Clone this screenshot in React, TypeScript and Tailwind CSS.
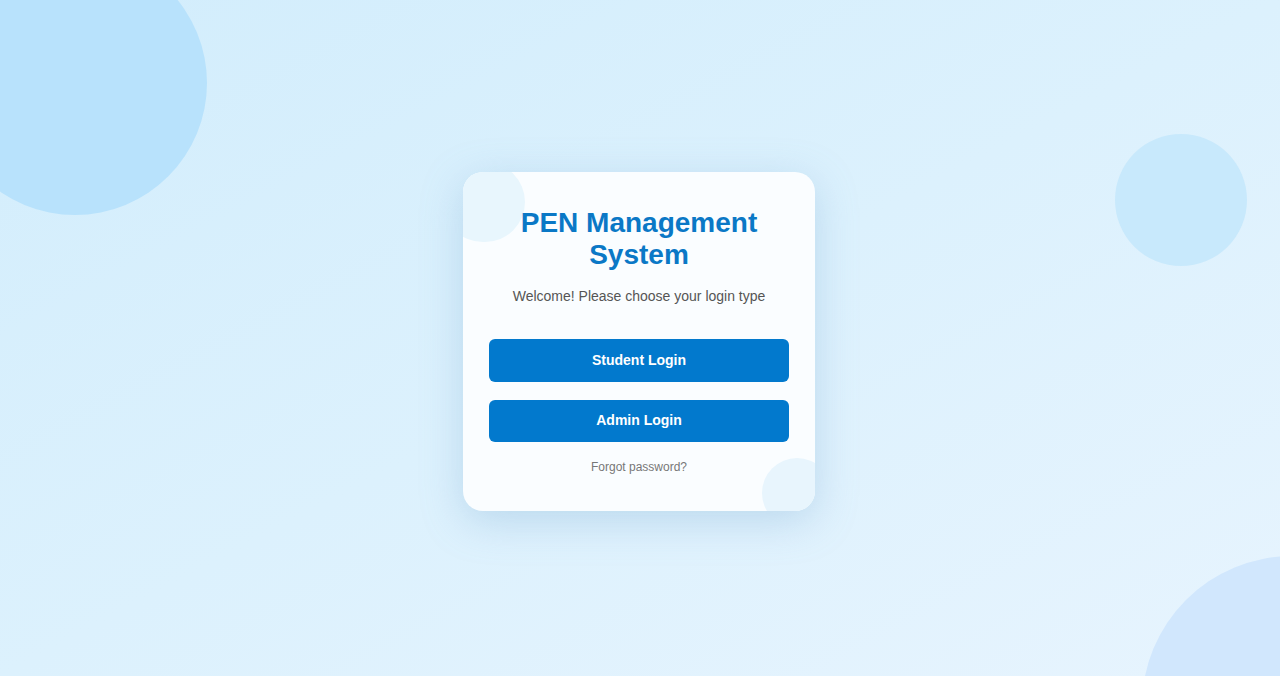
import { useState } from "react";

export default function App() {
  const [mode, setMode] = useState<string | null>(null);

  return (
    <div className="relative w-full h-[676px] overflow-hidden bg-gradient-to-br from-[#d2edfc] via-[#dcf1fd] to-[#e7f4fe] flex items-center justify-center font-['Liberation_Sans',Arial,sans-serif]">
      {/* background bubbles */}
      <div className="absolute -left-[57px] -top-[49px] w-[264px] h-[264px] rounded-full bg-[#b8e2fc]" />
      <div className="absolute left-[1115px] top-[134px] w-[132px] h-[132px] rounded-full bg-[#c8e9fc]" />
      <div className="absolute left-[1142px] top-[556px] w-[300px] h-[300px] rounded-full bg-[#d1e7fd]" />

      {/* Card */}
      <div className="relative z-10 mt-[6px] mr-[2px] w-[352px] h-[339px] rounded-[20px] overflow-hidden bg-[#fafdff] shadow-[0_10px_40px_rgba(120,170,210,0.35)] px-[26px] pt-[35px] flex flex-col items-center">
        <div className="absolute -left-[20px] -top-[10px] w-[82px] h-[80px] rounded-full bg-[#e8f6fd]" />
        <div className="absolute left-[299px] top-[286px] w-[70px] h-[70px] rounded-full bg-[#e8f5fd]" />

        <h1 className="relative text-[28px] leading-[32px] font-bold text-[#0a78c6] text-center">
          PEN Management
          <br />
          System
        </h1>
        <p className="relative mt-[17px] text-[14px] leading-[16px] text-[#555555] text-center">
          Welcome! Please choose your login type
        </p>

        <div className="relative mt-[35px] w-full flex flex-col gap-[18px]">
          <button
            onClick={() => setMode("student")}
            className="w-full h-[43px] rounded-[6px] bg-[#0279cd] text-white text-[14px] font-bold hover:bg-[#0268b2]"
          >
            Student Login
          </button>
          <button
            onClick={() => setMode("admin")}
            className="w-full h-[42px] rounded-[6px] bg-[#0279cd] text-white text-[14px] font-bold hover:bg-[#0268b2]"
          >
            Admin Login
          </button>
        </div>

        <a href="#" className="relative mt-[18px] text-[12px] leading-[14px] text-[#777777]" data-mode={mode ?? ""}>
          Forgot password?
        </a>
      </div>
    </div>
  );
}
